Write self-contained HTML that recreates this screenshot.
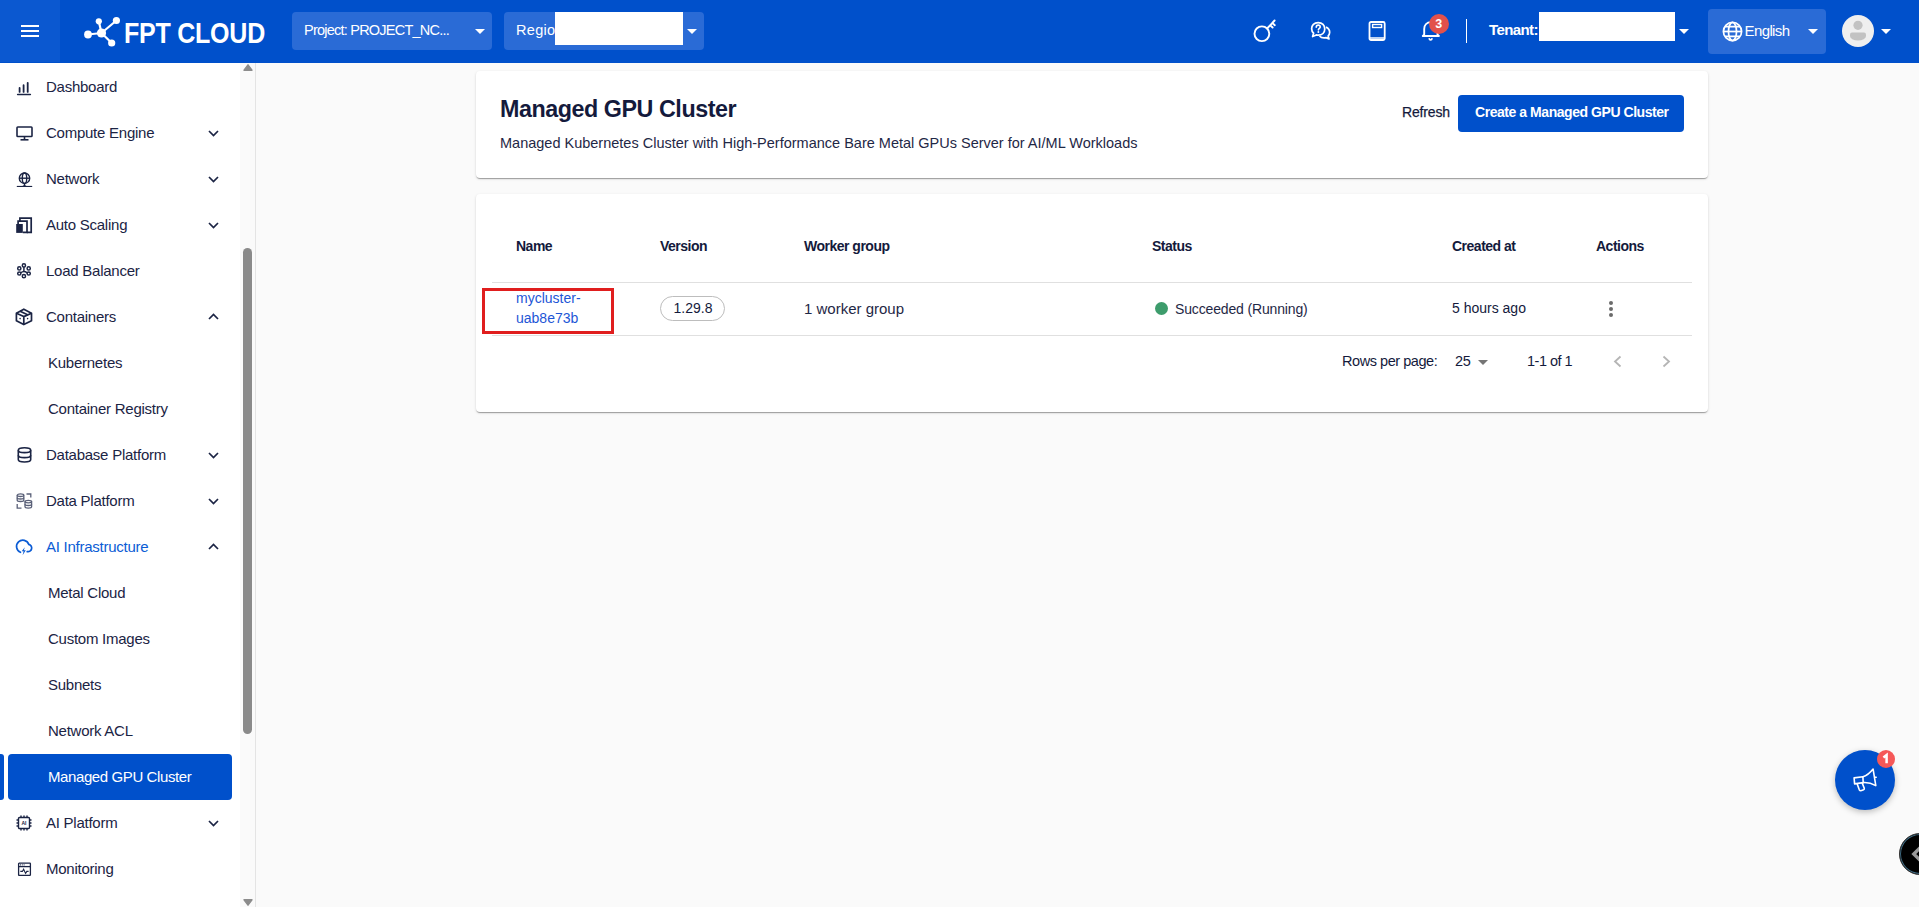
<!DOCTYPE html>
<html><head><meta charset="utf-8">
<style>
*{box-sizing:border-box;margin:0;padding:0}
html,body{width:1919px;height:907px;overflow:hidden;background:#fafafa;font-family:"Liberation Sans",sans-serif;color:#141a3c}
.a{position:absolute;white-space:nowrap}
#top{position:absolute;left:0;top:0;width:1919px;height:63px;background:#0050cb}
#ham{position:absolute;left:0;top:0;width:60px;height:62px;background:#0b58d0}
.dd{position:absolute;top:12px;height:38px;border-radius:4px;background:#2a6bd6}
.caret{position:absolute;width:0;height:0;border-left:5px solid transparent;border-right:5px solid transparent;border-top:5px solid #fff}
#side{position:absolute;left:0;top:63px;width:256px;height:844px;background:#fff}
.mi{position:absolute;left:0;width:240px;height:46px;font-size:15px;color:#1a2340}
.mi .t{position:absolute;left:46px;top:14px;white-space:nowrap}
.mi.sub .t{left:48px}
.mi svg.ic{position:absolute;left:16px;top:15px}
.chev{position:absolute;left:208px;top:19px}
.card{position:absolute;background:#fff;border-radius:4px;box-shadow:0 2px 1px -1px rgba(0,0,0,.2),0 1px 1px 0 rgba(0,0,0,.14),0 1px 3px 0 rgba(0,0,0,.12)}
.th{position:absolute;top:238.5px;font-size:14px;line-height:1;font-weight:700;color:#141a3c;white-space:nowrap;letter-spacing:-0.5px}
</style></head>
<body>
<!-- TOP BAR -->
<div id="top">
  <div id="ham">
    <div class="a" style="left:21px;top:25px;width:18px;height:2px;background:#fff"></div>
    <div class="a" style="left:21px;top:30px;width:18px;height:2px;background:#fff"></div>
    <div class="a" style="left:21px;top:35px;width:18px;height:2px;background:#fff"></div>
  </div>
  <!-- logo -->
  <svg class="a" style="left:80px;top:13px" width="44" height="40" viewBox="0 0 44 40">
    <g stroke="#fff" stroke-width="2.2" fill="none">
      <line x1="21.5" y1="20" x2="8" y2="21.5"/>
      <line x1="21.5" y1="20" x2="18.8" y2="8.3"/>
      <line x1="21.5" y1="20" x2="36.4" y2="7.5"/>
      <line x1="21.5" y1="20" x2="31.7" y2="30"/>
    </g>
    <g fill="#fff">
      <circle cx="21.5" cy="20" r="4.6"/>
      <circle cx="8" cy="21.5" r="3.9"/>
      <circle cx="18.8" cy="8.3" r="3.1"/>
      <circle cx="36.4" cy="7.5" r="3.6"/>
      <circle cx="31.7" cy="30" r="3.6"/>
    </g>
  </svg>
  <div class="a" style="left:124px;top:16px;font-size:29.4px;font-weight:700;color:#fff;transform:scaleX(0.852);transform-origin:0 0;letter-spacing:-0.3px">FPT CLOUD</div>

  <div class="dd" style="left:292px;width:200px">
    <div class="a" style="left:12px;top:10.2px;font-size:14.5px;color:#fff;letter-spacing:-0.77px">Project: PROJECT_NC...</div>
    <div class="caret" style="left:183px;top:17px"></div>
  </div>
  <div class="dd" style="left:504px;width:200px">
    <div class="a" style="left:12px;top:10.2px;font-size:14.5px;color:#fff;letter-spacing:0.3px">Region</div>
    <div class="a" style="left:51px;top:0;width:128px;height:32.5px;background:#fff"></div>
    <div class="caret" style="left:183px;top:17px"></div>
  </div>

  <!-- right icons -->
  <svg class="a" style="left:1248px;top:18px" width="30" height="28" viewBox="0 0 30 28">
    <circle cx="13.9" cy="15.75" r="7.4" stroke="#fff" stroke-width="1.9" fill="none"/>
    <path d="M19.1 10.5 L26.6 2.5 M24.3 5 L26.8 7.2 M22.2 7.3 L24.6 9.5" stroke="#fff" stroke-width="1.9" fill="none" stroke-linecap="round"/>
  </svg>
  <svg class="a" style="left:1310px;top:21px" width="21.3" height="19.7" viewBox="0 0 26 24">
    <path d="M10 2 C5 2 2 5.2 2 9.5 C2 11.8 3 13.6 4.4 14.9 L3.2 19 L7.7 17 C8.4 17.2 9.2 17.3 10 17.3 C15 17.3 18 14 18 9.6 C18 5.2 15 2 10 2 Z" stroke="#fff" stroke-width="2.1" fill="none" stroke-linejoin="round"/>
    <path d="M19.5 7.5 C22.3 8.7 24 11 24 13.8 C24 15.6 23.3 17.1 22.2 18.2 L23.2 21.8 L19.5 20.3 C18.8 20.5 18 20.6 17.2 20.6 C14.8 20.6 12.8 19.7 11.6 18.3" stroke="#fff" stroke-width="2.1" fill="none" stroke-linejoin="round"/>
    <path d="M7.6 7.6 C7.6 6 8.7 5 10.1 5 C11.5 5 12.5 6 12.5 7.3 C12.5 8.8 10.4 9.2 10.2 10.9" stroke="#fff" stroke-width="1.9" fill="none" stroke-linecap="round"/>
    <circle cx="10.2" cy="13.4" r="1.2" fill="#fff"/>
  </svg>
  <svg class="a" style="left:1366px;top:19px" width="22" height="24" viewBox="0 0 22 24">
    <rect x="3.5" y="3" width="15.2" height="18" rx="1.5" stroke="#fff" stroke-width="1.8" fill="none"/>
    <line x1="3.5" y1="19" x2="18.7" y2="19" stroke="#fff" stroke-width="1.5"/>
    <rect x="6.6" y="5.5" width="9" height="3" stroke="#fff" stroke-width="1.4" fill="none"/>
  </svg>
  <svg class="a" style="left:1419px;top:19px" width="24" height="24" viewBox="0 0 24 24">
    <path d="M11.8 3.2 C7.9 3.2 5.2 5.9 5.2 9.9 L5.2 15.6 L3.8 17 L19.9 17 L18.5 15.6 L18.5 9.9 C18.5 5.9 15.7 3.2 11.8 3.2 Z" stroke="#fff" stroke-width="1.9" fill="none" stroke-linejoin="round"/>
    <path d="M10 19.2 C10.3 20.3 10.9 20.8 11.6 20.8 C12.3 20.8 12.9 20.3 13.2 19.2" stroke="#fff" stroke-width="1.7" fill="none"/>
  </svg>
  <div class="a" style="left:1428.75px;top:13.75px;width:20px;height:20px;border-radius:50%;background:#e2514b;color:#fff;font-size:12.5px;font-weight:700;text-align:center;line-height:20px">3</div>
  <div class="a" style="left:1466px;top:19px;width:1.3px;height:24px;background:#fff"></div>
  <div class="a" style="left:1489px;top:21px;font-size:15px;font-weight:700;color:#fff;letter-spacing:-0.6px">Tenant:</div>
  <div class="a" style="left:1539px;top:12px;width:136px;height:29px;background:#fff"></div>
  <div class="caret" style="left:1679px;top:29px"></div>
  <div class="a" style="left:1708px;top:9px;width:118px;height:45px;border-radius:4px;background:#2a6bd6"></div>
  <svg class="a" style="left:1720.5px;top:19.8px" width="23" height="23" viewBox="0 0 24 24">
    <g stroke="#fff" stroke-width="1.8" fill="none">
      <circle cx="12" cy="12" r="9.5"/>
      <ellipse cx="12" cy="12" rx="4.2" ry="9.5"/>
      <line x1="2.5" y1="12" x2="21.5" y2="12"/>
      <path d="M4 7 H20 M4 17 H20"/>
    </g>
  </svg>
  <div class="a" style="left:1744.5px;top:21.9px;font-size:15px;color:#fff;letter-spacing:-0.6px">English</div>
  <div class="caret" style="left:1808px;top:29px"></div>
  <svg class="a" style="left:1842px;top:15px" width="32" height="32" viewBox="0 0 32 32">
    <circle cx="16" cy="16" r="16" fill="#efefef"/>
    <circle cx="16" cy="10.3" r="4.6" fill="#c2c2c2"/>
    <path d="M8 19.6 Q8 17.6 10 17.6 H22 Q24 17.6 24 19.6 V21 A8 4.5 0 0 1 8 21 Z" fill="#c2c2c2"/>
  </svg>
  <div class="caret" style="left:1881px;top:29px"></div>
</div>

<!-- SIDEBAR -->
<div id="side">
  <div class="a" style="left:240px;top:0;width:15px;height:845px;background:#fafafa"></div>
  <div class="a" style="left:255px;top:0;width:1px;height:845px;background:#e4e4e4"></div>
  <div class="a" style="left:243px;top:185px;width:9px;height:486px;border-radius:5px;background:#8a8a8a"></div>
  <svg class="a" style="left:242px;top:0px" width="12" height="9" viewBox="0 0 12 9"><path d="M6 1.8 L10 7.2 H2 Z" fill="#8c8c8c" stroke="#8c8c8c" stroke-width="1.4" stroke-linejoin="round"/></svg>
  <svg class="a" style="left:242px;top:835px" width="12" height="9" viewBox="0 0 12 9"><path d="M6 7.2 L10 1.8 H2 Z" fill="#8c8c8c" stroke="#8c8c8c" stroke-width="1.4" stroke-linejoin="round"/></svg>
</div>
<!-- MENU -->
<div class="a" style="left:0;top:87px;width:0;height:0"><svg class="a" style="left:16px;top:-6px" width="16" height="16" viewBox="0 0 16 16"><g stroke="#1b2444" stroke-width="1.8" stroke-linecap="round"><path d="M3.6 7 V10.9 M7.6 4.2 V10.9 M11.7 1.8 V10.9"/><path d="M1.6 13.5 H14.4" stroke-width="1.5"/></g></svg><div class="a" style="left:46px;top:-9px;font-size:15px;color:#1b2444;letter-spacing:-0.25px">Dashboard</div></div>
<div class="a" style="left:0;top:133px;width:0;height:0"><svg class="a" style="left:16px;top:-7px" width="17" height="15" viewBox="0 0 17 15"><g stroke="#1b2444" stroke-width="1.6" fill="none"><rect x="1" y="1" width="15" height="9.5" rx="0.8"/><line x1="8.5" y1="10.5" x2="8.5" y2="13.5"/><line x1="4.5" y1="13.8" x2="12.5" y2="13.8"/></g></svg><div class="a" style="left:46px;top:-9px;font-size:15px;color:#1b2444;letter-spacing:-0.25px">Compute Engine</div><svg class="a" style="left:208px;top:-3px" width="11" height="7" viewBox="0 0 11 7"><path d="M1 1 L5.5 5.5 L10 1" stroke="#1b2444" stroke-width="1.7" fill="none"/></svg></div>
<div class="a" style="left:0;top:179px;width:0;height:0"><svg class="a" style="left:16px;top:-7px" width="17" height="15" viewBox="0 0 17 15"><g stroke="#1b2444" stroke-width="1.4" fill="none"><circle cx="8.5" cy="6.2" r="5.2"/><ellipse cx="8.5" cy="6.2" rx="2.2" ry="5.2"/><line x1="3.3" y1="6.2" x2="13.7" y2="6.2"/><path d="M8.5 11.4 V13 Q8.5 14.4 6.5 14.6 M8.5 13 Q8.5 14.4 10.5 14.6"/><line x1="0.8" y1="14.6" x2="16.2" y2="14.6"/></g></svg><div class="a" style="left:46px;top:-9px;font-size:15px;color:#1b2444;letter-spacing:-0.25px">Network</div><svg class="a" style="left:208px;top:-3px" width="11" height="7" viewBox="0 0 11 7"><path d="M1 1 L5.5 5.5 L10 1" stroke="#1b2444" stroke-width="1.7" fill="none"/></svg></div>
<div class="a" style="left:0;top:225px;width:0;height:0"><svg class="a" style="left:16px;top:-8px" width="17" height="17" viewBox="0 0 17 17"><g stroke="#1b2444" stroke-width="1.7" fill="none" stroke-linejoin="miter"><path d="M3.9 4.2 V1.1 H15.2 V15.3 H10.8"/><path d="M2.1 7.2 V4.2 H11 V15.3 H6.8"/></g><rect x="0.2" y="7" width="6.6" height="8.9" fill="#1b2444"/></svg><div class="a" style="left:46px;top:-9px;font-size:15px;color:#1b2444;letter-spacing:-0.25px">Auto Scaling</div><svg class="a" style="left:208px;top:-3px" width="11" height="7" viewBox="0 0 11 7"><path d="M1 1 L5.5 5.5 L10 1" stroke="#1b2444" stroke-width="1.7" fill="none"/></svg></div>
<div class="a" style="left:0;top:271px;width:0;height:0"><svg class="a" style="left:16px;top:-9px" width="16" height="17" viewBox="0 0 16 17"><g stroke="#1b2444" stroke-width="1.5" fill="none"><circle cx="7.9" cy="3.4" r="1.6"/><circle cx="3.3" cy="6.4" r="1.6"/><circle cx="12.7" cy="6.4" r="1.6"/><circle cx="3.3" cy="11.5" r="1.6"/><circle cx="12.7" cy="11.5" r="1.6"/><circle cx="7.9" cy="14.2" r="1.6"/><path d="M7.9 5 V9.2 M4.8 10.8 Q7.9 8.2 11.1 10.8"/></g></svg><div class="a" style="left:46px;top:-9px;font-size:15px;color:#1b2444;letter-spacing:-0.25px">Load Balancer</div></div>
<div class="a" style="left:0;top:317px;width:0;height:0"><svg class="a" style="left:15px;top:-9px" width="18" height="18" viewBox="0 0 18 18"><g stroke="#1b2444" stroke-width="1.7" fill="none" stroke-linejoin="round"><path d="M8.8 1.2 L16.5 5.2 V12.8 L8.8 16.6 L1.4 12.8 V5.2 Z"/><path d="M1.4 5.2 L8.8 8.6 L16.5 5.2 M8.8 8.6 V16.6"/><path d="M5.1 3.2 L12.6 6.8"/></g><g fill="#1b2444"><circle cx="5.1" cy="10.6" r="0.8"/><circle cx="12.6" cy="10.6" r="0.8"/></g></svg><div class="a" style="left:46px;top:-9px;font-size:15px;color:#1b2444;letter-spacing:-0.25px">Containers</div><svg class="a" style="left:208px;top:-4px" width="11" height="7" viewBox="0 0 11 7"><path d="M1 6 L5.5 1.5 L10 6" stroke="#1b2444" stroke-width="1.7" fill="none"/></svg></div>
<div class="a" style="left:0;top:363px;width:0;height:0"><div class="a" style="left:48px;top:-9px;font-size:15px;color:#1b2444;letter-spacing:-0.25px">Kubernetes</div></div>
<div class="a" style="left:0;top:409px;width:0;height:0"><div class="a" style="left:48px;top:-9px;font-size:15px;color:#1b2444;letter-spacing:-0.25px">Container Registry</div></div>
<div class="a" style="left:0;top:455px;width:0;height:0"><svg class="a" style="left:17px;top:-8px" width="15" height="16" viewBox="0 0 15 16"><g stroke="#1b2444" stroke-width="1.6" fill="none"><ellipse cx="7.5" cy="3.2" rx="6.2" ry="2.4"/><path d="M1.3 3.2 V12.6 C1.3 14 4 15 7.5 15 C11 15 13.7 14 13.7 12.6 V3.2"/><path d="M1.3 8.2 C1.3 9.6 4 10.6 7.5 10.6 C11 10.6 13.7 9.6 13.7 8.2"/></g></svg><div class="a" style="left:46px;top:-9px;font-size:15px;color:#1b2444;letter-spacing:-0.25px">Database Platform</div><svg class="a" style="left:208px;top:-3px" width="11" height="7" viewBox="0 0 11 7"><path d="M1 1 L5.5 5.5 L10 1" stroke="#1b2444" stroke-width="1.7" fill="none"/></svg></div>
<div class="a" style="left:0;top:501px;width:0;height:0"><svg class="a" style="left:16px;top:-8px" width="17" height="16" viewBox="0 0 17 16"><g stroke="#5a6078" stroke-width="1.3" fill="none"><ellipse cx="4.5" cy="2.2" rx="3.3" ry="1.3"/><path d="M1.2 2.2V7.2C1.2 8 2.7 8.5 4.5 8.5 6.3 8.5 7.8 8 7.8 7.2V2.2"/><path d="M1.2 4.7C1.2 5.5 2.7 6 4.5 6 6.3 6 7.8 5.5 7.8 4.7"/><ellipse cx="12.3" cy="8.6" rx="3.3" ry="1.3"/><path d="M9 8.6V13.8C9 14.6 10.5 15.1 12.3 15.1 14.1 15.1 15.6 14.6 15.6 13.8V8.6"/><path d="M9 11.2C9 12 10.5 12.5 12.3 12.5 14.1 12.5 15.6 12 15.6 11.2"/><path d="M10.5 1H14.8V4.5 M1.2 11V15.2H5.5"/></g></svg><div class="a" style="left:46px;top:-9px;font-size:15px;color:#1b2444;letter-spacing:-0.25px">Data Platform</div><svg class="a" style="left:208px;top:-3px" width="11" height="7" viewBox="0 0 11 7"><path d="M1 1 L5.5 5.5 L10 1" stroke="#1b2444" stroke-width="1.7" fill="none"/></svg></div>
<div class="a" style="left:0;top:547px;width:0;height:0"><svg class="a" style="left:15px;top:-9px" width="18" height="18" viewBox="0 0 18 18"><path d="M5.5 14.3 A6.3 6.3 0 1 1 13.8 6.4 A3.6 3.6 0 0 1 12.2 13.6" stroke="#0b5cd5" stroke-width="1.7" fill="none" stroke-linecap="round"/><path d="M9.8 9.2 L6.7 13.2 H8.6 L7.6 17.2 L10.8 12.3 H8.9 Z" fill="#0b5cd5"/></svg><div class="a" style="left:46px;top:-9px;font-size:15px;color:#0b5cd5;letter-spacing:-0.25px">AI Infrastructure</div><svg class="a" style="left:208px;top:-4px" width="11" height="7" viewBox="0 0 11 7"><path d="M1 6 L5.5 1.5 L10 6" stroke="#1b2444" stroke-width="1.7" fill="none"/></svg></div>
<div class="a" style="left:0;top:593px;width:0;height:0"><div class="a" style="left:48px;top:-9px;font-size:15px;color:#1b2444;letter-spacing:-0.25px">Metal Cloud</div></div>
<div class="a" style="left:0;top:639px;width:0;height:0"><div class="a" style="left:48px;top:-9px;font-size:15px;color:#1b2444;letter-spacing:-0.25px">Custom Images</div></div>
<div class="a" style="left:0;top:685px;width:0;height:0"><div class="a" style="left:48px;top:-9px;font-size:15px;color:#1b2444;letter-spacing:-0.25px">Subnets</div></div>
<div class="a" style="left:0;top:731px;width:0;height:0"><div class="a" style="left:48px;top:-9px;font-size:15px;color:#1b2444;letter-spacing:-0.25px">Network ACL</div></div>
<div class="a" style="left:0;top:754px;width:4px;height:46px;background:#0050cb;border-radius:0 3px 3px 0"></div>
<div class="a" style="left:8px;top:754px;width:224px;height:46px;background:#0050cb;border-radius:4px"></div>
<div class="a" style="left:48px;top:768px;font-size:15px;color:#fff;letter-spacing:-0.4px">Managed GPU Cluster</div>
<div class="a" style="left:0;top:823px;width:0;height:0"><svg class="a" style="left:16px;top:-8px" width="16" height="16" viewBox="0 0 16 16"><g stroke="#1b2444" stroke-width="1.4" fill="none"><rect x="2.5" y="2.5" width="11" height="11" rx="1"/><path d="M5 0.5V2.5 M8 0.5V2.5 M11 0.5V2.5 M5 13.5V15.5 M8 13.5V15.5 M11 13.5V15.5 M0.5 5H2.5 M0.5 8H2.5 M0.5 11H2.5 M13.5 5H15.5 M13.5 8H15.5 M13.5 11H15.5"/></g><text x="8" y="10" font-family="Liberation Sans" font-size="5" font-weight="700" fill="#1b2444" text-anchor="middle">AI</text></svg><div class="a" style="left:46px;top:-9px;font-size:15px;color:#1b2444;letter-spacing:-0.25px">AI Platform</div><svg class="a" style="left:208px;top:-3px" width="11" height="7" viewBox="0 0 11 7"><path d="M1 1 L5.5 5.5 L10 1" stroke="#1b2444" stroke-width="1.7" fill="none"/></svg></div>
<div class="a" style="left:0;top:869px;width:0;height:0"><svg class="a" style="left:17px;top:-7px" width="15" height="15" viewBox="0 0 15 15"><g stroke="#1b2444" stroke-width="1.3" fill="none"><rect x="1.6" y="1.2" width="11.8" height="12.2" rx="0.6"/><line x1="1.6" y1="4.6" x2="13.4" y2="4.6"/><path d="M3.3 9.4 H5.4 L6.6 7.2 L8.6 11.4 L9.8 9.4 H11.6" stroke-width="1.1"/></g><g fill="#1b2444"><rect x="3" y="2.4" width="1" height="1"/><rect x="4.8" y="2.4" width="1" height="1"/><rect x="6.6" y="2.4" width="1" height="1"/></g></svg><div class="a" style="left:46px;top:-9px;font-size:15px;color:#1b2444;letter-spacing:-0.25px">Monitoring</div></div>
<!-- /MENU -->
<!-- CONTENT -->
<div class="card" style="left:476px;top:71px;width:1232px;height:107px"></div>
<div class="a" style="left:500px;top:97.7px;font-size:23.3px;line-height:1;font-weight:700;color:#141a3c;letter-spacing:-0.45px">Managed GPU Cluster</div>
<div class="a" style="left:500px;top:136.3px;font-size:14.5px;line-height:1;color:#1f2846">Managed Kubernetes Cluster with High-Performance Bare Metal GPUs Server for AI/ML Workloads</div>
<div class="a" style="left:1402px;top:105.4px;font-size:14px;line-height:1;color:#141a3c;letter-spacing:-0.15px;-webkit-text-stroke:0.25px #141a3c">Refresh</div>
<div class="a" style="left:1458px;top:95px;width:226px;height:37px;border-radius:4px;background:#0050cb"></div>
<div class="a" style="left:1475px;top:105.4px;font-size:14px;line-height:1;font-weight:700;color:#fff;letter-spacing:-0.45px">Create a Managed GPU Cluster</div>

<div class="card" style="left:476px;top:194px;width:1232px;height:218px"></div>
<div class="th" style="left:516px">Name</div>
<div class="th" style="left:660px">Version</div>
<div class="th" style="left:804px">Worker group</div>
<div class="th" style="left:1152px">Status</div>
<div class="th" style="left:1452px">Created at</div>
<div class="th" style="left:1596px">Actions</div>
<div class="a" style="left:492px;top:282px;width:1200px;height:1px;background:#e0e0e0"></div>
<div class="a" style="left:492px;top:335px;width:1200px;height:1px;background:#e0e0e0"></div>
<div class="a" style="left:482px;top:288px;width:132px;height:46px;border:3px solid #e01e1e"></div>
<div class="a" style="left:516px;top:291.4px;font-size:14px;line-height:1;color:#1e56d6">mycluster-</div>
<div class="a" style="left:516px;top:311.2px;font-size:14px;line-height:1;color:#1e56d6">uab8e73b</div>
<div class="a" style="left:660px;top:296px;width:65px;height:25px;border:1px solid #bdbdbd;border-radius:13px"></div>
<div class="a" style="left:673.5px;top:301px;font-size:14px;line-height:1;color:#141a3c">1.29.8</div>
<div class="a" style="left:804px;top:301px;font-size:15px;line-height:1;color:#1f2846">1 worker group</div>
<div class="a" style="left:1155px;top:301.5px;width:13px;height:13px;border-radius:50%;background:#3d9c6c"></div>
<div class="a" style="left:1175px;top:302.2px;font-size:14px;line-height:1;color:#1f2846;letter-spacing:-0.15px">Succeeded (Running)</div>
<div class="a" style="left:1452px;top:300.6px;font-size:14px;line-height:1;color:#141a3c">5 hours ago</div>
<div class="a" style="left:1609px;top:301px;width:4px;height:4px;border-radius:50%;background:#6b6b6b"></div>
<div class="a" style="left:1609px;top:307px;width:4px;height:4px;border-radius:50%;background:#6b6b6b"></div>
<div class="a" style="left:1609px;top:313px;width:4px;height:4px;border-radius:50%;background:#6b6b6b"></div>
<div class="a" style="left:1342px;top:353.7px;font-size:14.5px;line-height:1;color:#141a3c;letter-spacing:-0.45px">Rows per page:</div>
<div class="a" style="left:1455px;top:353.7px;font-size:14.5px;line-height:1;color:#141a3c;letter-spacing:-0.2px">25</div>
<div class="a" style="left:1478px;top:360px;width:0;height:0;border-left:5px solid transparent;border-right:5px solid transparent;border-top:5px solid #757575"></div>
<div class="a" style="left:1527px;top:353.7px;font-size:14.5px;line-height:1;color:#141a3c;letter-spacing:-0.5px">1-1 of 1</div>
<svg class="a" style="left:1612px;top:354px" width="12" height="14" viewBox="0 0 12 14"><path d="M8.5 2.5 L3 7.5 L8.5 12.5" stroke="#b5b5b5" stroke-width="1.8" fill="none"/></svg>
<svg class="a" style="left:1660px;top:354px" width="12" height="14" viewBox="0 0 12 14"><path d="M3.5 2.5 L9 7.5 L3.5 12.5" stroke="#b5b5b5" stroke-width="1.8" fill="none"/></svg>

<!-- FAB -->
<div class="a" style="left:1835px;top:750px;width:60px;height:60px;border-radius:50%;background:#0050cb;box-shadow:0 2px 6px rgba(0,0,0,.25)"></div>
<svg class="a" style="left:1850px;top:765px" width="30" height="30" viewBox="0 0 30 30">
  <g stroke="#fff" stroke-width="1.6" fill="none" stroke-linejoin="round" stroke-linecap="round">
    <path d="M4.1 12.9 L12.9 11.8 L13.2 17.6 L4.6 18.9 Z"/>
    <path d="M12.9 11.8 C16 11 20 8 23.1 4.1 L25.8 20.6 C22 18.5 17 17.3 13.2 17.6"/>
    <path d="M7.1 18.7 L9.3 24.8 Q10 26 11.5 25.6 L13.5 24.8 Q14.6 24.2 14.3 23.2 L12.2 18.1"/>
    <path d="M25.2 12.3 H26.2"/>
  </g>
</svg>
<div class="a" style="left:1877px;top:750px;width:18px;height:18px;border-radius:50%;background:#f55858"></div><svg class="a" style="left:1877px;top:750px" width="18" height="18" viewBox="0 0 18 18"><path d="M6.4 7.6 L9.6 5.1 V13.2" stroke="#fff" stroke-width="2.5" fill="none" stroke-linejoin="miter"/></svg>
<div class="a" style="left:1899px;top:833px;width:42px;height:42px;border-radius:50%;background:#000;border:1px solid #333;box-shadow:inset 0 0 0 1px #3d6b84"></div>
<svg class="a" style="left:1900px;top:833px" width="19" height="42" viewBox="0 0 19 42"><path d="M25 10 L13.8 21 L25 32" stroke="#9a9a9a" stroke-width="3.4" fill="none"/></svg>
<!-- /CONTENT -->
</body></html>
